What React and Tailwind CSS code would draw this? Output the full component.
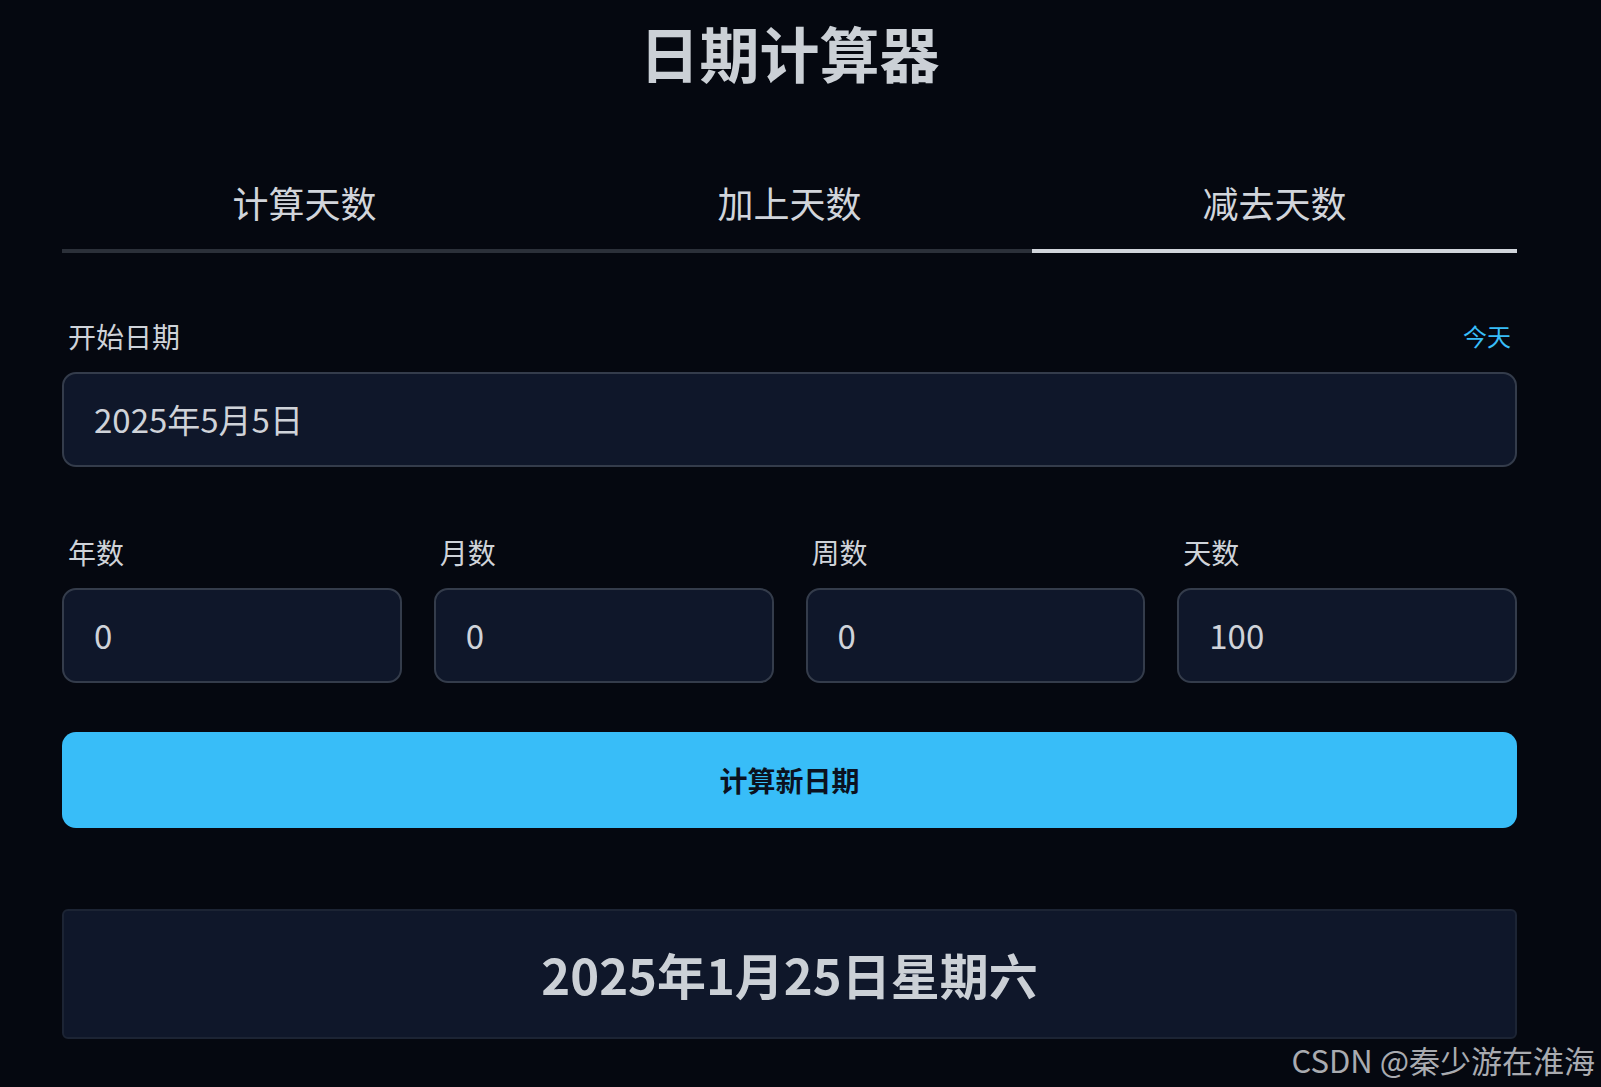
import React from "react";

const font = { fontFamily: '"Noto Sans CJK SC", "Noto Sans", sans-serif' };

function Field({ label, value }) {
  return (
    <div className="flex flex-col">
      <div className="px-[6px] text-[28px] leading-[40px] text-[#cfd3d9]">{label}</div>
      <div className="mt-[16px] h-[95px] rounded-[14px] border-2 border-[#343c4b] bg-[#0f172a] pl-[30px] flex items-center text-[33px] text-[#cfd3d9]">
        {value}
      </div>
    </div>
  );
}

export default function App() {
  const tabs = [
    { name: "计算天数", active: false },
    { name: "加上天数", active: false },
    { name: "减去天数", active: true },
  ];
  return (
    <div className="relative min-h-screen bg-[#050810] overflow-hidden" style={font}>
      <div className="pl-[62px] pr-[84px] pb-[40px]">
        <h1 className="pt-[16px] text-center text-[60px] leading-[72px] font-bold text-[#cbd0d6]">
          日期计算器
        </h1>
        <div className="mt-[90px] grid grid-cols-3">
          {tabs.map((t) => (
            <div
              key={t.name}
              className={`text-center text-[36px] leading-[48px] pb-[23px] border-b-4 text-[#d1d5db] ${
                t.active ? "border-[#d1d5db]" : "border-[#2b3039]"
              }`}
            >
              {t.name}
            </div>
          ))}
        </div>

        <div className="mt-[63px] flex items-center justify-between px-[6px]">
          <span className="text-[28px] leading-[40px] text-[#cfd3d9]">开始日期</span>
          <span className="text-[24px] leading-[40px] text-[#38bdf8]">今天</span>
        </div>
        <div className="mt-[16px] h-[95px] rounded-[14px] border-2 border-[#343c4b] bg-[#0f172a] pl-[30px] flex items-center text-[33px] text-[#cfd3d9]">
          2025年5月5日
        </div>

        <div className="mt-[65px] grid grid-cols-4 gap-8">
          <Field label="年数" value="0" />
          <Field label="月数" value="0" />
          <Field label="周数" value="0" />
          <Field label="天数" value="100" />
        </div>

        <div className="mt-[49px] h-[96px] rounded-[14px] bg-[#38bdf8] flex items-center justify-center text-[28px] font-bold text-[#0b1220]">
          计算新日期
        </div>

        <div className="mt-[81px] h-[130px] rounded-[6px] border-2 border-[#1c2434] bg-[#0f172a] flex items-center justify-center text-[49px] font-bold text-[#cbd0d6]">
          2025年1月25日星期六
        </div>
      </div>

      <div className="absolute right-[6px] top-[1040px] text-[31px] leading-[40px] text-[#a9abb0]">
        CSDN @秦少游在淮海
      </div>
    </div>
  );
}
